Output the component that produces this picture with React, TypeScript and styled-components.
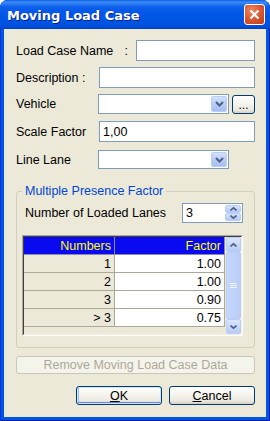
import React from "react";
import styled, { createGlobalStyle, css } from "styled-components";

const Global = createGlobalStyle`
  html, body { margin: 0; padding: 0; background: #ffffff; }
  body { width: 270px; height: 421px; overflow: hidden; }
  * { box-sizing: border-box; }
`;

const Window = styled.div`
  width: 270px;
  height: 421px;
  display: flex;
  flex-direction: column;
  background: #0055e5;
  border-radius: 8px 8px 0 0;
  overflow: hidden;
  box-shadow: inset 1px 0 #0831d9, inset -1px 0 #001ea0, inset 0 -1px #001ea0;
  font-family: "Liberation Sans", Arial, sans-serif;
  font-size: 12.5px;
  color: #000;
`;

const TitleBar = styled.div`
  flex: none;
  height: 29px;
  display: flex;
  align-items: center;
  justify-content: space-between;
  padding: 0 5px 0 7px;
  background: linear-gradient(
    to bottom,
    #0a5ae6 0px,
    #3c8ef7 2px,
    #2b7af2 4px,
    #0d5eeb 7px,
    #0256e8 14px,
    #0055e5 20px,
    #0052df 25px,
    #0047cf 28px,
    #003dba 29px
  );
`;

const TitleText = styled.span`
  font-family: "DejaVu Sans", sans-serif;
  font-weight: bold;
  font-size: 13px;
  color: #ffffff;
  text-shadow: 1px 1px 0 #0a1f8c;
  padding-top: 1px;
`;

const CloseButton = styled.div`
  width: 21px;
  height: 21px;
  border: 1px solid #ffffff;
  border-radius: 3px;
  background: radial-gradient(circle at 35% 30%, #ef8a62 0%, #dd5a33 45%, #c23b17 100%);
  display: flex;
  align-items: center;
  justify-content: center;
`;

const Client = styled.div`
  flex: 1;
  margin: 0 4px 4px;
  background: #ece9d8;
  display: flex;
  flex-direction: column;
  padding: 11px 11px 0 12px;
`;

const FormRow = styled.div<{ $top: number; $h: number }>`
  display: flex;
  align-items: center;
  height: ${(p) => p.$h}px;
  margin-top: ${(p) => p.$top}px;
`;

const Label = styled.div<{ $w: number }>`
  flex: none;
  width: ${(p) => p.$w}px;
  display: flex;
  justify-content: space-between;
  padding-right: 8px;
  white-space: nowrap;
`;

const TextInput = styled.div<{ $w?: number }>`
  ${(p) => (p.$w ? css`width: ${p.$w}px; flex: none;` : css`flex: 1;`)}
  height: 100%;
  border: 1px solid #7f9db9;
  background: #ffffff;
  padding-left: 3px;
  display: flex;
  align-items: center;
`;

const Combo = styled.div`
  flex: none;
  width: 131px;
  height: 100%;
  border: 1px solid #7f9db9;
  background: #ffffff;
  display: flex;
  justify-content: flex-end;
  align-items: stretch;
  padding: 1px;
`;

const ComboButton = styled.div`
  width: 16px;
  border: 1px solid #b9cdf6;
  border-radius: 2px;
  background: linear-gradient(to bottom, #d4e1fd, #b4c9f5 60%, #a6bef2);
  display: flex;
  align-items: center;
  justify-content: center;
`;

const XPButton = styled.div<{ $w?: number; $h: number; $default?: boolean }>`
  ${(p) => (p.$w ? css`width: ${p.$w}px; flex: none;` : css`flex: 1;`)}
  height: ${(p) => p.$h}px;
  border: 1px solid #003c74;
  border-radius: 3px;
  background: linear-gradient(to bottom, #ffffff 0%, #f6f5f0 40%, #ebe9e0 80%, #d6d0c5 100%);
  display: flex;
  align-items: center;
  justify-content: center;
  ${(p) =>
    p.$default &&
    css`
      box-shadow: inset 0 0 0 1px #cee7ff, inset 0 -1px 0 1px #6982ee, inset 1px 0 0 1px #a4bdec;
    `}
`;

const EllipsisBtn = styled(XPButton)`
  margin-left: 3px;
  align-items: flex-end;
  padding-bottom: 3px;
  font-size: 12px;
  line-height: 10px;
`;

const Group = styled.fieldset`
  margin: 15px 0 0;
  padding: 0 10px 11px 5px;
  border: 1px solid #d0d0bf;
  border-radius: 3px;
  min-width: 0;
`;

const Legend = styled.legend`
  color: #0046d5;
  padding: 0 3px;
  line-height: 14px;
  font-size: 12.5px;
`;

const SpinRow = styled.div`
  display: flex;
  align-items: center;
  height: 20px;
  margin-top: 5px;
`;

const SpinLabel = styled.div`
  width: 160px;
  padding-left: 3px;
  white-space: nowrap;
`;

const Spin = styled.div`
  width: 61px;
  height: 20px;
  border: 1px solid #7f9db9;
  background: #ffffff;
  display: flex;
  padding: 1px 1px 1px 0;
`;

const SpinValue = styled.div`
  flex: 1;
  padding-left: 3px;
  display: flex;
  align-items: center;
`;

const SpinButtons = styled.div`
  width: 16px;
  display: flex;
  flex-direction: column;
`;

const SpinBtn = styled.div`
  flex: 1;
  border: 1px solid #b9cdf6;
  border-radius: 2px;
  background: linear-gradient(to bottom, #d4e1fd, #b4c9f5);
  display: flex;
  align-items: center;
  justify-content: center;
`;

const GridFrame = styled.div`
  margin-top: 12px;
  width: 221px;
  height: 101px;
  border-style: solid;
  border-width: 1px;
  border-color: #aca899 #ffffff #ffffff #aca899;
  display: flex;
`;

const GridInner = styled.div`
  flex: 1;
  display: flex;
  border-style: solid;
  border-width: 1px;
  border-color: #404040 #f1efe2 #f1efe2 #404040;
  background: #ece9d8;
  gap: 1px;
`;

const Table = styled.div`
  width: 201px;
  display: grid;
  grid-template-columns: 91px 110px;
  grid-auto-rows: 18px;
  align-content: start;
`;

const Cell = styled.div<{ $kind: "head" | "num" | "val" }>`
  display: flex;
  align-items: center;
  justify-content: flex-end;
  padding-right: 3px;
  border-right: 1px solid #aca899;
  border-bottom: 1px solid #aca899;
  ${(p) =>
    p.$kind === "head"
      ? css`
          background: #0a0af0;
          color: #ffff00;
          border-color: #8c8ca8;
        `
      : p.$kind === "num"
      ? css`
          background: #ece9d8;
        `
      : css`
          background: #ffffff;
        `}
`;

const ScrollBar = styled.div`
  width: 15px;
  display: flex;
  flex-direction: column;
  background: #f3f2ec;
`;

const ScrollBtn = styled.div`
  height: 15px;
  border: 1px solid #b9cdf6;
  border-radius: 2px;
  background: linear-gradient(to bottom, #d9e5fd, #b6cbf6);
  display: flex;
  align-items: center;
  justify-content: center;
`;

const ScrollThumb = styled.div`
  flex: 1;
  border: 1px solid #b9cdf6;
  border-radius: 2px;
  background: linear-gradient(to right, #c6d7fc, #b9cdf8);
  display: flex;
  align-items: center;
  justify-content: center;
`;

const RemoveButton = styled.div`
  margin-top: 8px;
  height: 18px;
  border: 1px solid #c9c7ba;
  border-radius: 3px;
  background: #f5f4ea;
  color: #aca899;
  display: flex;
  align-items: center;
  justify-content: center;
`;

const ButtonRow = styled.div`
  margin-top: 12px;
  display: flex;
  justify-content: flex-end;
  gap: 7px;
`;

const U = styled.span`
  text-decoration: underline;
`;

const Chevron = () => (
  <svg width="9" height="6" viewBox="0 0 9 6">
    <polyline points="1,1 4.5,4.5 8,1" fill="none" stroke="#4d6185" strokeWidth="2" />
  </svg>
);

const Arrow = ({ up, w = 7 }: { up?: boolean; w?: number }) => (
  <svg width={w} height="4" viewBox="0 0 7 4">
    <polyline
      points={up ? "0.5,3.5 3.5,0.8 6.5,3.5" : "0.5,0.5 3.5,3.2 6.5,0.5"}
      fill="none"
      stroke="#4d6185"
      strokeWidth="1.6"
    />
  </svg>
);

const Grip = () => (
  <svg width="7" height="7" viewBox="0 0 7 7">
    <path d="M0 1.5h7M0 3.5h7M0 5.5h7" stroke="#eef3fe" strokeWidth="1" />
  </svg>
);

const rows: [string, string][] = [
  ["1", "1.00"],
  ["2", "1.00"],
  ["3", "0.90"],
  ["> 3", "0.75"],
];

export default function App() {
  return (
    <>
      <Global />
      <Window>
        <TitleBar>
          <TitleText>Moving Load Case</TitleText>
          <CloseButton>
            <svg width="11" height="11" viewBox="0 0 11 11">
              <path d="M1.5 1.5L9.5 9.5M9.5 1.5L1.5 9.5" stroke="#ffffff" strokeWidth="2.2" />
            </svg>
          </CloseButton>
        </TitleBar>
        <Client>
          <FormRow $top={0} $h={21}>
            <Label $w={120}>
              <span>Load Case Name</span>
              <span>:</span>
            </Label>
            <TextInput />
          </FormRow>
          <FormRow $top={6} $h={21}>
            <Label $w={83}>
              <span>Description :</span>
            </Label>
            <TextInput />
          </FormRow>
          <FormRow $top={6} $h={20}>
            <Label $w={82}>
              <span>Vehicle</span>
            </Label>
            <Combo>
              <ComboButton>
                <Chevron />
              </ComboButton>
            </Combo>
            <EllipsisBtn $w={23} $h={19}>
              ...
            </EllipsisBtn>
          </FormRow>
          <FormRow $top={7} $h={21}>
            <Label $w={83}>
              <span>Scale Factor</span>
            </Label>
            <TextInput>1,00</TextInput>
          </FormRow>
          <FormRow $top={8} $h={19}>
            <Label $w={82}>
              <span>Line Lane</span>
            </Label>
            <Combo>
              <ComboButton>
                <Chevron />
              </ComboButton>
            </Combo>
          </FormRow>

          <Group>
            <Legend>Multiple Presence Factor</Legend>
            <SpinRow>
              <SpinLabel>Number of Loaded Lanes</SpinLabel>
              <Spin>
                <SpinValue>3</SpinValue>
                <SpinButtons>
                  <SpinBtn>
                    <Arrow up />
                  </SpinBtn>
                  <SpinBtn>
                    <Arrow />
                  </SpinBtn>
                </SpinButtons>
              </Spin>
            </SpinRow>
            <GridFrame>
              <GridInner>
                <Table>
                  <Cell $kind="head">Numbers</Cell>
                  <Cell $kind="head">Factor</Cell>
                  {rows.map(([n, f]) => (
                    <React.Fragment key={n}>
                      <Cell $kind="num">{n}</Cell>
                      <Cell $kind="val">{f}</Cell>
                    </React.Fragment>
                  ))}
                </Table>
                <ScrollBar>
                  <ScrollBtn>
                    <Arrow up />
                  </ScrollBtn>
                  <ScrollThumb>
                    <Grip />
                  </ScrollThumb>
                  <ScrollBtn>
                    <Arrow />
                  </ScrollBtn>
                </ScrollBar>
              </GridInner>
            </GridFrame>
          </Group>

          <RemoveButton>Remove Moving Load Case Data</RemoveButton>
          <ButtonRow>
            <XPButton $w={86} $h={19} $default>
              <span>
                <U>O</U>K
              </span>
            </XPButton>
            <XPButton $w={86} $h={19}>
              <span>
                <U>C</U>ancel
              </span>
            </XPButton>
          </ButtonRow>
        </Client>
      </Window>
    </>
  );
}
